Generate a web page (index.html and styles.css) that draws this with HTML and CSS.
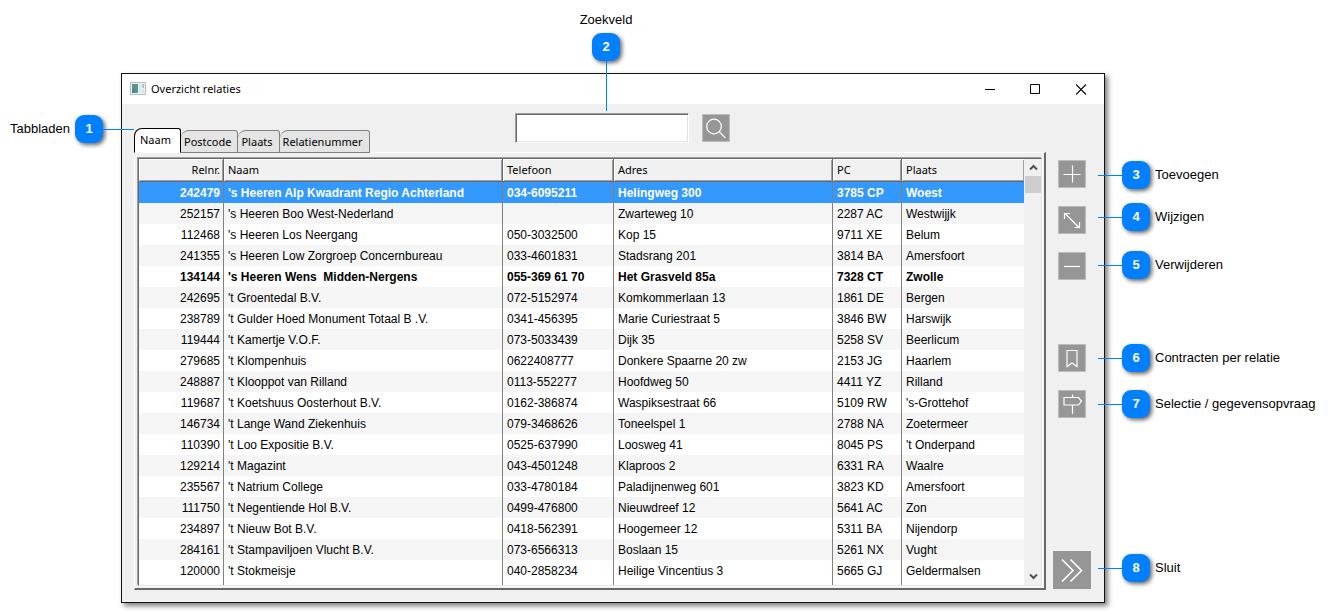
FILE: index.html
```html
<!DOCTYPE html>
<html lang="nl">
<head>
<meta charset="utf-8">
<title>Overzicht relaties</title>
<link rel="stylesheet" href="styles.css">
</head>
<body>
<main class="page">
  <section class="window">
    <header class="titlebar">
      <svg class="app-icon" width="16" height="14" viewBox="0 0 16 14"><rect x=".5" y=".5" width="15" height="12" fill="#f0f4f6" stroke="#b4bcc4"/><rect x="2" y="2" width="6" height="9" fill="#4f9a8c"/><rect x="2" y="7" width="3" height="4" fill="#4c7fa8"/><rect x="9" y="2" width="2" height="9" fill="#dfe5ea"/><rect x="12" y="2" width="2" height="4" fill="#a5c8cf"/><rect x="12" y="7" width="2" height="4" fill="#d5e3e6"/></svg>
      <h1 class="title">Overzicht relaties</h1>
      <div class="window-controls">
        <button class="control" aria-label="Minimaliseren"><svg width="11" height="11" viewBox="0 0 11 11"><path d="M1 5.5h10" stroke="#000"/></svg></button>
        <button class="control" aria-label="Maximaliseren"><svg width="11" height="11" viewBox="0 0 11 11"><path d="M.5 .5h9v9h-9z" fill="none" stroke="#000"/></svg></button>
        <button class="control" aria-label="Sluiten"><svg width="11" height="11" viewBox="0 0 11 11"><path d="M0 .5l10 10M10 .5l-10 10" stroke="#000" stroke-width="1.1"/></svg></button>
      </div>
    </header>
    <div class="client">
      <div class="content">
        <div class="toolbar">
          <div class="tabs" role="tablist">
            <button class="tab tab-active" role="tab" aria-selected="true">Naam</button>
            <button class="tab" role="tab" aria-selected="false">Postcode</button>
            <button class="tab" role="tab" aria-selected="false">Plaats</button>
            <button class="tab" role="tab" aria-selected="false">Relatienummer</button>
          </div>
          <form class="search">
            <input class="search-input" type="text" aria-label="Zoekveld">
            <button class="tool" type="button" aria-label="Zoeken"><svg width="26" height="26" viewBox="0 0 26 26"><circle cx="11" cy="11.500" r="7.300"/><path d="M16.300 16.800l6 6"/></svg></button>
          </form>
        </div>
        <div class="panel">
          <div class="list">
            <table class="grid">
              <colgroup><col class="c-nr"><col class="c-name"><col class="c-tel"><col class="c-addr"><col class="c-pc"><col></colgroup>
              <thead><tr><th class="num">Relnr.</th><th>Naam</th><th>Telefoon</th><th>Adres</th><th>PC</th><th>Plaats</th></tr></thead>
              <tbody>
                <tr class="selected"><td class="num">242479</td><td>'s Heeren Alp Kwadrant Regio Achterland</td><td>034-6095211</td><td>Helingweg 300</td><td>3785 CP</td><td>Woest</td></tr>
                <tr><td class="num">252157</td><td>'s Heeren Boo West-Nederland</td><td></td><td>Zwarteweg 10</td><td>2287 AC</td><td>Westwijjk</td></tr>
                <tr><td class="num">112468</td><td>'s Heeren Los Neergang</td><td>050-3032500</td><td>Kop 15</td><td>9711 XE</td><td>Belum</td></tr>
                <tr><td class="num">241355</td><td>'s Heeren Low Zorgroep Concernbureau</td><td>033-4601831</td><td>Stadsrang 201</td><td>3814 BA</td><td>Amersfoort</td></tr>
                <tr class="strong"><td class="num">134144</td><td>'s Heeren Wens&nbsp; Midden-Nergens</td><td>055-369 61 70</td><td>Het Grasveld 85a</td><td>7328 CT</td><td>Zwolle</td></tr>
                <tr><td class="num">242695</td><td>'t Groentedal B.V.</td><td>072-5152974</td><td>Komkommerlaan 13</td><td>1861 DE</td><td>Bergen</td></tr>
                <tr><td class="num">238789</td><td>'t Gulder Hoed Monument Totaal B .V.</td><td>0341-456395</td><td>Marie Curiestraat 5</td><td>3846 BW</td><td>Harswijk</td></tr>
                <tr><td class="num">119444</td><td>'t Kamertje V.O.F.</td><td>073-5033439</td><td>Dijk 35</td><td>5258 SV</td><td>Beerlicum</td></tr>
                <tr><td class="num">279685</td><td>'t Klompenhuis</td><td>0622408777</td><td>Donkere Spaarne 20 zw</td><td>2153 JG</td><td>Haarlem</td></tr>
                <tr><td class="num">248887</td><td>'t Klooppot van Rilland</td><td>0113-552277</td><td>Hoofdweg 50</td><td>4411 YZ</td><td>Rilland</td></tr>
                <tr><td class="num">119687</td><td>'t Koetshuus Oosterhout B.V.</td><td>0162-386874</td><td>Waspiksestraat 66</td><td>5109 RW</td><td>'s-Grottehof</td></tr>
                <tr><td class="num">146734</td><td>'t Lange Wand Ziekenhuis</td><td>079-3468626</td><td>Toneelspel 1</td><td>2788 NA</td><td>Zoetermeer</td></tr>
                <tr><td class="num">110390</td><td>'t Loo Expositie B.V.</td><td>0525-637990</td><td>Loosweg 41</td><td>8045 PS</td><td>'t Onderpand</td></tr>
                <tr><td class="num">129214</td><td>'t Magazint</td><td>043-4501248</td><td>Klaproos 2</td><td>6331 RA</td><td>Waalre</td></tr>
                <tr><td class="num">235567</td><td>'t Natrium College</td><td>033-4780184</td><td>Paladijnenweg 601</td><td>3823 KD</td><td>Amersfoort</td></tr>
                <tr><td class="num">111750</td><td>'t Negentiende Hol B.V.</td><td>0499-476800</td><td>Nieuwdreef 12</td><td>5641 AC</td><td>Zon</td></tr>
                <tr><td class="num">234897</td><td>'t Nieuw Bot B.V.</td><td>0418-562391</td><td>Hoogemeer 12</td><td>5311 BA</td><td>Nijendorp</td></tr>
                <tr><td class="num">284161</td><td>'t Stampaviljoen Vlucht B.V.</td><td>073-6566313</td><td>Boslaan 15</td><td>5261 NX</td><td>Vught</td></tr>
                <tr><td class="num">120000</td><td>'t Stokmeisje</td><td>040-2858234</td><td>Heilige Vincentius 3</td><td>5665 GJ</td><td>Geldermalsen</td></tr>
              </tbody>
              <tfoot><tr><td></td><td></td><td></td><td></td><td></td><td></td></tr></tfoot>
            </table>
            <div class="scrollbar">
              <button class="scroll-button" aria-label="Omhoog"><svg width="9" height="7" viewBox="0 0 9 7"><path d="M1 5.500l3.500-3.500 3.500 3.500"/></svg></button>
              <div class="thumb"></div>
              <button class="scroll-button scroll-down" aria-label="Omlaag"><svg width="9" height="7" viewBox="0 0 9 7"><path d="M1 1.500l3.500 3.500 3.500-3.500"/></svg></button>
            </div>
          </div>
        </div>
      </div>
      <aside class="side">
        <button class="tool" aria-label="Toevoegen"><svg width="26" height="26" viewBox="0 0 26 26"><path d="M4.500 13.500h17M13.500 4.500v17"/></svg></button>
        <button class="tool" aria-label="Wijzigen"><svg width="26" height="26" viewBox="0 0 26 26"><path d="M6 6.500l14.500 14.500M5.500 12V6.500H11M15.500 20.500H20.500V15"/></svg></button>
        <button class="tool" aria-label="Verwijderen"><svg width="26" height="26" viewBox="0 0 26 26"><path d="M5 13.500h16"/></svg></button>
        <button class="tool tool-group" aria-label="Contracten per relatie"><svg width="26" height="26" viewBox="0 0 26 26"><path d="M8 5.500h10v16l-5-3.500-5 3.500z"/></svg></button>
        <button class="tool" aria-label="Selectie / gegevensopvraag"><svg width="26" height="26" viewBox="0 0 26 26"><path d="M13.500 3.500v3M13.500 14v9M5 6.500h14.500l3 3.500-3 4H5v-7.500z"/></svg></button>
        <button class="tool tool-close" aria-label="Sluit"><svg width="38" height="38" viewBox="0 0 38 38"><path d="M9 8.500L20 19.500 9 30.500M17.500 8.500L28.500 19.500 17.500 30.500"/></svg></button>
      </aside>
    </div>

    <div class="callout callout-left"><span>Tabbladen</span><b class="badge">1</b><i class="line line-long"></i></div>
    <div class="callout callout-top"><span>Zoekveld</span><b class="badge">2</b><i class="line-down"></i></div>
    <div class="callout callout-right at-add"><i class="line"></i><b class="badge">3</b><span>Toevoegen</span></div>
    <div class="callout callout-right at-edit"><i class="line"></i><b class="badge">4</b><span>Wijzigen</span></div>
    <div class="callout callout-right at-delete"><i class="line"></i><b class="badge">5</b><span>Verwijderen</span></div>
    <div class="callout callout-right at-contracts"><i class="line"></i><b class="badge">6</b><span>Contracten per relatie</span></div>
    <div class="callout callout-right at-select"><i class="line"></i><b class="badge">7</b><span>Selectie / gegevensopvraag</span></div>
    <div class="callout callout-right at-close"><i class="line"></i><b class="badge">8</b><span>Sluit</span></div>
  </section>
</main>
</body>
</html>
```
FILE: styles.css
```css
* { box-sizing: border-box; }
body {
  margin: 0;
  background: #fff;
  color: #000;
  font: 12px/20px "Liberation Sans", Arial, sans-serif;
}
button {
  margin: 0;
  padding: 0;
  border: 0;
  background: none;
  color: inherit;
  font: inherit;
}
svg { display: block; }

.page { padding: 73px 223px 9px 121px; }
.window {
  position: relative;
  border: 1px solid #111;
  background: #f0f0f0;
  box-shadow: 3px 3px 5px rgba(0, 0, 0, .5);
}
.titlebar {
  display: flex;
  align-items: center;
  height: 30px;
  padding-left: 8px;
  background: #fff;
}
.title {
  margin: 0 auto 0 5px;
  font: 11px/20px "Noto Sans", sans-serif;
}
.window-controls { display: flex; }
.control {
  display: grid;
  place-items: center;
  width: 46px;
  height: 30px;
}

.client {
  display: flex;
  gap: 7px;
  padding: 0 13px 12px 12px;
}
.content { flex: 1; min-width: 0; }
.toolbar { display: flex; height: 48px; }
.tabs {
  display: flex;
  flex: 0 0 381px;
  align-items: flex-end;
  font: 11px/20px "Noto Sans", sans-serif;
}
.tab {
  height: 23px;
  margin-bottom: -1px;
  padding: 0 6px 0 3px;
  border: 1px solid #808080;
  border-left-width: 0;
  border-radius: 8px 3px 0 0;
  background: #e4e4e4;
}
.tab-active {
  height: 25px;
  padding: 0 9px 2px 5px;
  border-color: #000;
  border-left-width: 1px;
  border-bottom-color: #fff;
  background: #fff;
}
.search {
  display: flex;
  align-items: flex-start;
  gap: 13px;
  padding-top: 9px;
}
.search-input {
  width: 174px;
  height: 30px;
  padding: 2px 4px;
  border: 1px solid;
  border-color: #a0a0a0 #fff #fff #a0a0a0;
  border-radius: 0;
  background: #fff;
  font: inherit;
  box-shadow: inset 1px 1px #696969, inset -1px -1px #e3e3e3;
}
.tool {
  display: grid;
  place-items: center;
  width: 28px;
  height: 28px;
  border: 1px solid #bdbdbd;
  background: #969696;
}
.tool svg {
  fill: none;
  stroke: #fff;
  stroke-width: 1.2;
}
.search .tool { margin-top: 1px; }

.panel {
  padding: 5px 2px 2px 3px;
  border: solid;
  border-width: 1px 2px 2px 1px;
  border-color: #fff #696969 #696969 #fff;
}
.list {
  display: flex;
  border: 1px solid;
  border-color: #696969 #e3e3e3 #e3e3e3 #696969;
  background: #f0f0f0;
  box-shadow: -1px -1px #a0a0a0, 1px 1px #fff;
}
.grid {
  flex: 1;
  width: 100%;
  margin-right: 1px;
  table-layout: fixed;
  border-collapse: separate;
  border-spacing: 0;
  background: #fff;
}
.c-nr { width: 85px; }
.c-name { width: 279px; }
.c-tel { width: 111px; }
.c-addr { width: 219px; }
.c-pc { width: 69px; }
.grid th {
  height: 23px;
  padding: 0 4px;
  border-right: 1px solid #696969;
  border-bottom: 1px solid #696969;
  background: #f0f0f0;
  font: 11px/20px "Noto Sans", sans-serif;
  text-align: left;
  box-shadow: inset 1px 1px #fff, inset -1px -1px #a0a0a0;
}
.grid td {
  height: 21px;
  padding: 0 4px;
  border-right: 1px solid #808080;
  line-height: 20px;
  white-space: nowrap;
}
.grid th:last-child, .grid td:last-child { border-right: 0; }
.grid .num { padding-right: 3px; text-align: right; }
.grid tbody tr:nth-child(even) { background: #f5f5f5; }
.grid tbody .selected { background: #39f; color: #fff; font-weight: bold; }
.strong { font-weight: bold; }
.grid tfoot td { height: 4px; line-height: 0; }

.scrollbar {
  display: flex;
  flex: 0 0 16px;
  flex-direction: column;
}
.scroll-button {
  display: grid;
  place-items: center;
  height: 17px;
}
.scroll-button svg { fill: none; stroke: #505050; stroke-width: 2; }
.scroll-down { margin-top: auto; }
.thumb { height: 17px; background: #cdcdcd; }

.side {
  display: flex;
  flex: 0 0 38px;
  flex-direction: column;
  align-items: center;
  gap: 18px;
  padding: 56px 0 1px;
}
.tool-group { margin-top: 46px; }
.tool-close {
  width: 38px;
  height: 38px;
  margin-top: auto;
  border: 0;
}
.side .tool-close svg { stroke-width: 1.6; }

/* Numbered callouts lie over and around the window. */
.callout {
  position: absolute;
  display: flex;
  align-items: center;
  font-size: 13px;
  white-space: nowrap;
}
.badge {
  width: 28px;
  height: 28px;
  border-radius: 9px;
  background: #0080ff;
  color: #fff;
  line-height: 28px;
  text-align: center;
  box-shadow: 2px 2px 4px rgba(0, 0, 0, .6);
}
.line { width: 24px; height: 1px; background: #0080ff; }
.line-long { width: 31px; }
.line-down { width: 1px; height: 50px; background: #0080ff; }
.callout-left { top: 41px; right: calc(100% - 12px); }
.callout-left span { margin-right: 5px; }
.callout-top {
  bottom: calc(100% - 37px);
  left: 454px;
  width: 60px;
  flex-direction: column;
}
.callout-top span { margin-bottom: 3px; }
.callout-right { left: calc(100% - 6px); }
.callout-right span { margin-left: 5px; }
.at-add { top: 87px; }
.at-edit { top: 129px; }
.at-delete { top: 177px; }
.at-contracts { top: 270px; }
.at-select { top: 316px; }
.at-close { top: 480px; }
```
